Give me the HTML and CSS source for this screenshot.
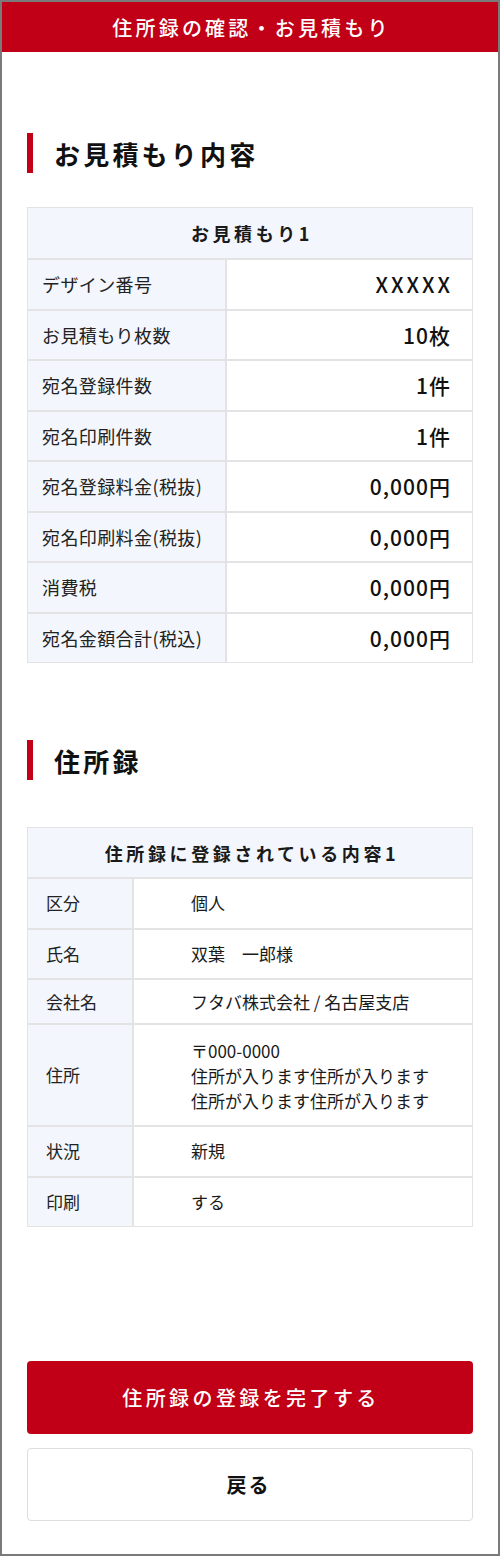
FILE: index.html
```html
<!DOCTYPE html>
<html lang="ja">
<head>
<meta charset="utf-8">
<title>住所録の確認・お見積もり</title>
<link rel="stylesheet" href="styles.css">
</head>
<body>
<div class="frame">
  <header class="topbar">住所録の確認・お見積もり</header>
  <main class="content">
    <h2 class="heading heading-first">お見積もり内容</h2>
    <table class="info estimate">
      <colgroup><col class="c-label"><col></colgroup>
      <thead>
        <tr><th colspan="2">お見積もり1</th></tr>
      </thead>
      <tbody>
        <tr><td class="label">デザイン番号</td><td class="num num-code">XXXXX</td></tr>
        <tr><td class="label">お見積もり枚数</td><td class="num">10枚</td></tr>
        <tr><td class="label">宛名登録件数</td><td class="num">1件</td></tr>
        <tr><td class="label">宛名印刷件数</td><td class="num">1件</td></tr>
        <tr><td class="label">宛名登録料金(税抜)</td><td class="num">0,000円</td></tr>
        <tr><td class="label">宛名印刷料金(税抜)</td><td class="num">0,000円</td></tr>
        <tr><td class="label">消費税</td><td class="num">0,000円</td></tr>
        <tr><td class="label">宛名金額合計(税込)</td><td class="num">0,000円</td></tr>
      </tbody>
    </table>

    <h2 class="heading heading-second">住所録</h2>
    <table class="info address">
      <colgroup><col class="c-label2"><col></colgroup>
      <thead>
        <tr><th colspan="2">住所録に登録されている内容1</th></tr>
      </thead>
      <tbody>
        <tr><td class="label">区分</td><td class="val">個人</td></tr>
        <tr><td class="label">氏名</td><td class="val">双葉　一郎様</td></tr>
        <tr class="compact"><td class="label">会社名</td><td class="val">フタバ株式会社 / 名古屋支店</td></tr>
        <tr class="multi"><td class="label">住所</td><td class="val">〒000-0000<br>住所が入ります住所が入ります<br>住所が入ります住所が入ります</td></tr>
        <tr><td class="label">状況</td><td class="val">新規</td></tr>
        <tr><td class="label">印刷</td><td class="val">する</td></tr>
      </tbody>
    </table>

    <div class="actions">
      <button class="btn btn-primary" type="button">住所録の登録を完了する</button>
      <button class="btn btn-secondary" type="button">戻る</button>
    </div>
  </main>
</div>
</body>
</html>
```

FILE: styles.css
```css
* { box-sizing: border-box; }

html, body {
  margin: 0;
  padding: 0;
  background: #ffffff;
}

body {
  font-family: "Noto Sans CJK JP", "Noto Sans", sans-serif;
  color: #1a1a1a;
}

.frame {
  width: 500px;
  height: 1556px;
  border: 2px solid #7a7a7a;
  background: #ffffff;
  overflow: hidden;
}

.topbar {
  height: 50px;
  background: #c10017;
  color: #ffffff;
  font-size: 20px;
  font-weight: 500;
  letter-spacing: 3.2px;
  display: flex;
  align-items: center;
  justify-content: center;
  padding-left: 3px;
}

.content {
  padding: 0 25px;
}

.heading {
  margin: 0;
  height: 40px;
  border-left: 6px solid #c10017;
  padding-left: 21px;
  display: flex;
  align-items: center;
  font-size: 26px;
  font-weight: 700;
  letter-spacing: 3.2px;
  color: #111111;
}

.heading-first { margin-top: 81px; }
.heading-second { margin-top: 77px; }

.info {
  width: 100%;
  table-layout: fixed;
  border-collapse: separate;
  border-spacing: 0;
}

.estimate { margin-top: 34px; }
.address { margin-top: 47px; }

.c-label { width: 199px; }
.c-label2 { width: 106px; }

.info th,
.info td {
  border: 1px solid #e3e3e3;
}

.info th {
  background: #f3f6fc;
  font-size: 18px;
  font-weight: 700;
  letter-spacing: 3.6px;
  line-height: 24px;
  padding: 13px 0 13px 4px;
  text-align: center;
  color: #1a1a1a;
}

.address th {
  padding-top: 12.5px;
  padding-bottom: 12.5px;
}

.info td {
  line-height: 24.5px;
  padding: 12px 0;
  vertical-align: middle;
}

.info td.label {
  background: #f3f6fc;
  color: #222222;
}

.estimate td.label {
  font-size: 18px;
  letter-spacing: 0.4px;
  padding-left: 14px;
}

.estimate td.num {
  text-align: right;
  font-size: 21px;
  font-weight: 500;
  letter-spacing: 1px;
  padding-right: 21px;
  color: #111111;
}

.estimate td.num-code {
  letter-spacing: 3px;
  padding-right: 19px;
}

.address td.label {
  font-size: 17px;
  padding-left: 18px;
}

.address td.val {
  font-size: 17px;
  padding-left: 57px;
  color: #1a1a1a;
}

.address tr.compact td {
  padding-top: 9.5px;
  padding-bottom: 9px;
}

.address tr.multi td.val {
  line-height: 25px;
  padding-top: 12.5px;
  padding-bottom: 12.5px;
}

.actions {
  margin-top: 134px;
  display: flex;
  flex-direction: column;
  gap: 14px;
}

.btn {
  width: 100%;
  height: 73px;
  border-radius: 4px;
  font-family: "Noto Sans CJK JP", "Noto Sans", sans-serif;
  font-size: 20px;
  cursor: pointer;
}

.btn-primary {
  background: #c10017;
  border: none;
  color: #ffffff;
  font-weight: 500;
  letter-spacing: 3.4px;
  padding-left: 8px;
}

.btn-secondary {
  background: #ffffff;
  border: 1px solid #dddddd;
  color: #111111;
  font-weight: 700;
  letter-spacing: 2px;
  padding-left: 3px;
}
```
